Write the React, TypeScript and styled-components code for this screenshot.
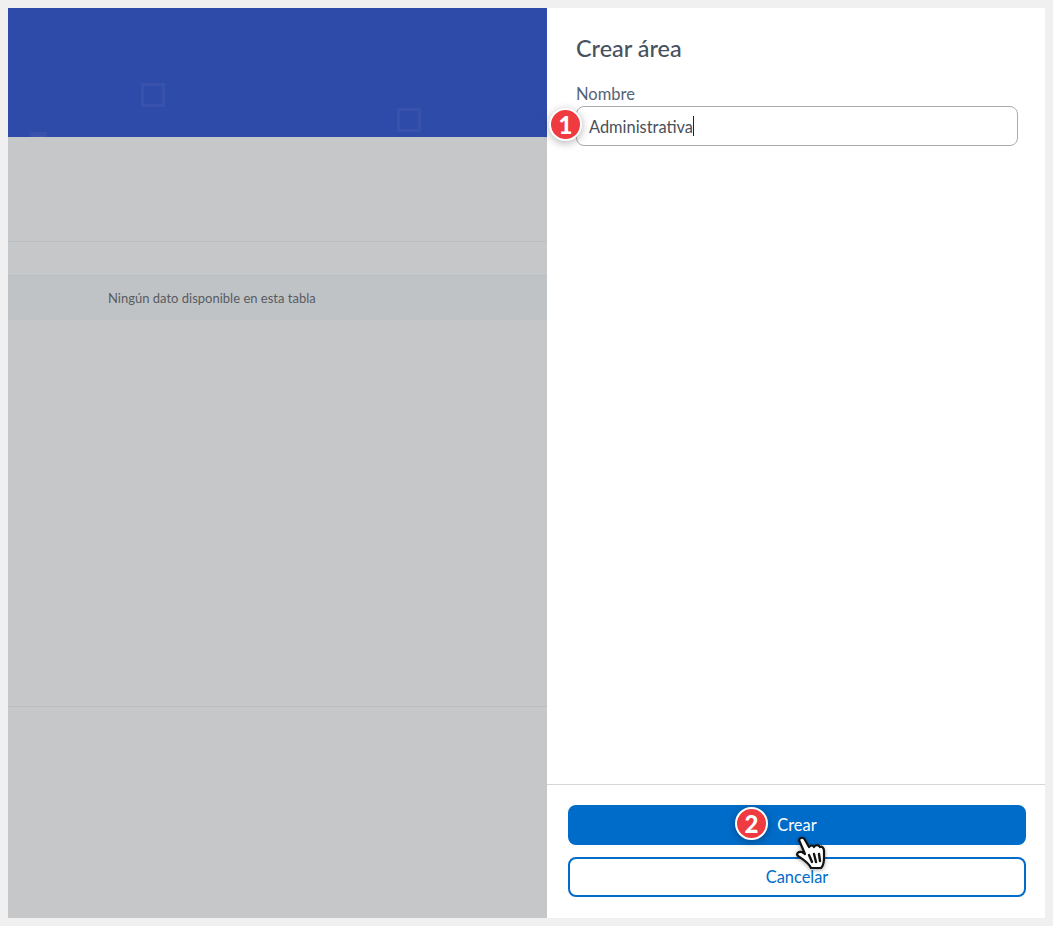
import React from "react";
import styled, { createGlobalStyle } from "styled-components";

const Global = createGlobalStyle`
  html, body { margin: 0; padding: 0; background: #f0f0f0; }
  body { font-family: "Lato", "Noto Sans", sans-serif; }
`;

const Page = styled.div`
  width: 1053px;
  height: 926px;
  padding: 8px;
  box-sizing: border-box;
  display: flex;
  overflow: hidden;
`;

const Backdrop = styled.section`
  width: 539px;
  height: 910px;
  flex: none;
  display: flex;
  flex-direction: column;
  background: #c6c7c9;
`;

const Hero = styled.div`
  height: 129px;
  flex: none;
  background: #2f4ba9;
  position: relative;
  overflow: hidden;
`;

const HeroSquare = styled.span<{ $x: number; $y: number; $solid?: boolean; $s: number }>`
  position: absolute;
  left: ${(p) => p.$x}px;
  top: ${(p) => p.$y}px;
  width: ${(p) => p.$s}px;
  height: ${(p) => p.$s}px;
  box-sizing: border-box;
  border: 3px solid #3851ab;
  background: ${(p) => (p.$solid ? "#3c56ad" : "transparent")};
`;

const TableGap = styled.div`
  height: 105px;
  box-sizing: border-box;
  flex: none;
  border-bottom: 1px solid #bcbfc2;
`;

const HeadRow = styled.div`
  height: 34px;
  box-sizing: border-box;
  flex: none;
  border-bottom: 1px solid #b7bec4;
`;

const EmptyRow = styled.div`
  height: 44px;
  flex: none;
  background: #c0c3c6;
  padding-left: 100px;
  display: flex;
  align-items: center;
  font-size: 13px;
  color: #585c60;
`;

const TableBody = styled.div`
  height: 387px;
  box-sizing: border-box;
  flex: none;
  border-bottom: 1px solid #babcbe;
`;

const Drawer = styled.aside`
  width: 498px;
  height: 910px;
  flex: none;
  background: #fff;
  display: flex;
  flex-direction: column;
`;

const DrawerBody = styled.div`
  flex: 1;
  padding: 25px 27px 0 29px;
`;

const Title = styled.h2`
  margin: 0;
  font-size: 23.4px;
  line-height: 30px;
  font-weight: 500;
  color: #47525e;
`;

const Label = styled.label`
  display: block;
  margin-top: 21px;
  font-size: 16.5px;
  line-height: 20px;
  color: #566376;
`;

const Field = styled.div`
  position: relative;
  margin-top: 2px;
  height: 40px;
  box-sizing: border-box;
  border: 1px solid #a9abae;
  border-radius: 8px;
  padding-left: 12px;
  display: flex;
  align-items: center;
  font-size: 16.4px;
  color: #4a5058;
`;

const Caret = styled.span`
  width: 1px;
  height: 20px;
  background: #222;
`;

const Badge = styled.span<{ $x: number; $y: number }>`
  position: absolute;
  left: ${(p) => p.$x}px;
  top: ${(p) => p.$y}px;
  width: 33px;
  height: 33px;
  box-sizing: border-box;
  border: 2px solid #fff;
  border-radius: 50%;
  background: #ef3b3f;
  color: #fff;
  font: 900 24px/29px "Lato", sans-serif;
  text-align: center;
  box-shadow: 0 2px 8px rgba(0, 0, 0, 0.3);
`;

const Footer = styled.div`
  height: 134px;
  flex: none;
  border-top: 1px solid #d6d6d6;
  padding: 20px 19px 0 21px;
  display: flex;
  flex-direction: column;
  gap: 12px;
  box-sizing: border-box;
`;

const Button = styled.button<{ $outline?: boolean }>`
  position: relative;
  height: 40px;
  box-sizing: border-box;
  border: 2px solid #006cc9;
  border-radius: 8px;
  background: ${(p) => (p.$outline ? "#fff" : "#006cc9")};
  color: ${(p) => (p.$outline ? "#006cc9" : "#fff")};
  font-family: inherit;
  font-size: 16.4px;
  padding: 0 0 2px;
`;

const Cursor = styled.svg`
  position: absolute;
  left: 226px;
  top: 29px;
  width: 30px;
  height: 34px;
  z-index: 2;
  filter: drop-shadow(0 1px 2px rgba(0, 0, 0, 0.35));
`;

export default function App() {
  return (
    <Page>
      <Global />
      <Backdrop>
        <Hero>
          <HeroSquare $x={133} $y={75} $s={24} />
          <HeroSquare $x={389} $y={100} $s={24} />
          <HeroSquare $x={22} $y={124} $s={17} $solid />
        </Hero>
        <TableGap />
        <HeadRow />
        <EmptyRow>Ningún dato disponible en esta tabla</EmptyRow>
        <TableBody />
      </Backdrop>
      <Drawer>
        <DrawerBody>
          <Title>Crear área</Title>
          <Label>Nombre</Label>
          <Field>
            Administrativa<Caret />
            <Badge $x={-28} $y={1}>1</Badge>
          </Field>
        </DrawerBody>
        <Footer>
          <Button>
            Crear
            <Badge $x={165} $y={0}>2</Badge>
            <Cursor viewBox="0 0 30 34">
              <path
                d="M3 4 C4 1 8 1 9 4 L13 11 C15 9 17 9 18 11 C20 8 23 9 24 11 C26 10 28 12 28 15 L28 22 C28 27 27 30 25 32 L15 32 C13 27 8 24 2 20 C0 18 2 15 6 16 L9 18 Z"
                fill="#fff"
                stroke="#111"
                strokeWidth="2.2"
                strokeLinejoin="round"
              />
              <path d="M13 19 L16 26 M18 18 L20 26 M23 18 L24 25" stroke="#111" strokeWidth="2.4" strokeLinecap="round" />
            </Cursor>
          </Button>
          <Button $outline>Cancelar</Button>
        </Footer>
      </Drawer>
    </Page>
  );
}
